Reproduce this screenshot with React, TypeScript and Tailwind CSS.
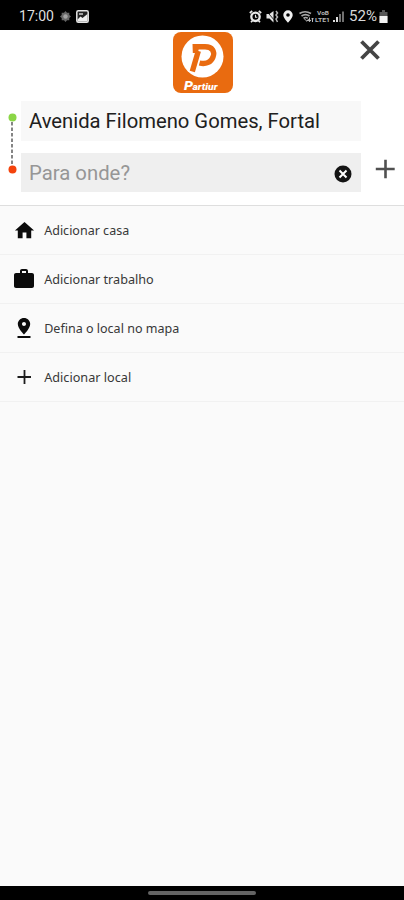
import type { ReactNode } from "react";

const options: { label: string; width: number; icon: ReactNode }[] = [
  {
    label: "Adicionar casa",
    width: 85,
    icon: (
      <svg viewBox="0 0 24 24" className="h-[23px] w-[23px]" fill="#0b0b0b">
        <path d="M10 20v-6h4v6h5v-8h3L12 3 2 12h3v8z" />
      </svg>
    ),
  },
  {
    label: "Adicionar trabalho",
    width: 109.5,
    icon: (
      <svg viewBox="0 0 24 24" className="h-6 w-6" fill="#0b0b0b">
        <path d="M20 6h-4V4c0-1.11-.89-2-2-2h-4c-1.11 0-2 .89-2 2v2H4c-1.11 0-1.99.89-1.99 2L2 19c0 1.11.89 2 2 2h16c1.11 0 2-.89 2-2V8c0-1.11-.89-2-2-2zm-6 0h-4V4h4v2z" />
      </svg>
    ),
  },
  {
    label: "Defina o local no mapa",
    width: 135,
    icon: (
      <svg viewBox="0 0 24 24" className="h-6 w-6" fill="#0b0b0b">
        <path d="M18.200 8c0-3.310-2.790-6-6.200-6S5.800 4.690 5.800 8c0 4.500 6.200 10.500 6.200 10.500S18.200 12.500 18.200 8zm-8.200 0c0-1.100.9-2 2-2s2 .9 2 2-.89 2-2 2c-1.100 0-2-.9-2-2zM5.500 20v2h13v-2z" />
      </svg>
    ),
  },
  {
    label: "Adicionar local",
    width: 87,
    icon: (
      <svg viewBox="0 0 24 24" className="h-6 w-6" fill="none" stroke="#1c1c1c" strokeWidth="1.8">
        <path d="M12.500 5v14M5.500 12h13.500" />
      </svg>
    ),
  },
];

function StatusBar() {
  return (
    <div className="flex h-[30px] shrink-0 items-center bg-black pt-[2px] pl-[19px] pr-[16px] text-[#d6d6d6]">
      <svg width="35" height="16" className="overflow-visible">
        <text x="0" y="13" fontSize="14" fill="#dedede" textLength="35" lengthAdjust="spacingAndGlyphs">
          17:00
        </text>
      </svg>
      <svg width="11" height="11" viewBox="0 0 11 11" className="ml-[6px]" fill="#666">
        <path d="M5.5 0 7 1.7 9.3 1.7 9.3 4 11 5.5 9.3 7v2.3H7L5.5 11 4 9.3H1.7V7L0 5.500 1.700 4V1.700H4z" />
        <circle cx="5.500" cy="5.500" r="2.200" fill="#a3a3a3" />
      </svg>
      <svg width="13" height="13" viewBox="0 0 13 13" className="ml-[5px]">
        <rect x=".8" y=".8" width="11.400" height="11.400" rx="1.500" fill="#222" stroke="#e5e5e5" strokeWidth="1.500" />
        <path d="M1.500 9.500 4.500 6.500 6.500 8 11.500 4v7.500h-10z" fill="#eee" />
        <path d="M3 4h4" stroke="#ccc" strokeWidth="1.500" />
      </svg>

      <div className="ml-auto flex items-center">
        {/* alarm */}
        <svg width="13" height="13" viewBox="0 0 13 13" fill="none" stroke="#e8e8e8">
          <circle cx="6.500" cy="6.800" r="4.200" strokeWidth="2.300" />
          <path d="M6.500 4.800V7.300H8.300" strokeWidth="1.100" />
          <path d="M.8 3 3.200.9M12.200 3 9.800.9M2 12.300l1.600-1.800M11 12.300 9.400 10.500" strokeWidth="1.700" />
        </svg>
        {/* muted, vibrating */}
        <svg width="13" height="13" viewBox="0 0 13 13" className="ml-[4px]">
          <path d="M.5 4H3.500L7.500 1v11.500L3.500 8.500H.5z" fill="#e4e4e4" />
          <path d="M0 .5 8 9.800" stroke="#000" strokeWidth=".8" />
          <path d="m10 1 1.500 2L10 5l1.500 2L10 9l1.500 3" fill="none" stroke="#b5b5b5" strokeWidth="1.500" />
        </svg>
        {/* location */}
        <svg width="10" height="13" viewBox="0 0 10 13" className="ml-[4px]">
          <path fillRule="evenodd" fill="#f0f0f0" d="M5 .3A4.700 4.700 0 0 0 .3 5C.3 8 5 12.800 5 12.800S9.700 8 9.700 5A4.700 4.700 0 0 0 5 .3zM5 3.200a1.800 1.800 0 1 1 0 3.600 1.800 1.800 0 0 1 0-3.600z" />
        </svg>
        {/* wifi */}
        <svg width="15" height="13" viewBox="0 0 15 13" className="ml-[6px]">
          <path d="M.5 3.500Q6 0 12 3.500M2.500 6Q6.500 3.300 10.500 6M4.500 8.200Q6.700 6.800 8.700 8.200" fill="none" stroke="#a5a5a5" strokeWidth="1.700" />
          <path d="m5 8.500 3 2.800 1.600-2.300M10.500 7.500v4M9 10l1.500 1.700L12 10M13.500 12V8M12.300 9.300 13.500 8l1.300 1.300" fill="none" stroke="#bbb" />
        </svg>
        {/* volte */}
        <svg width="16" height="13" viewBox="0 0 16 13" className="ml-[1px] overflow-visible" fill="#b4b4b4">
          <text x="2" y="4.800" fontSize="5.500" fontWeight="700" textLength="12" lengthAdjust="spacingAndGlyphs">VoB</text>
          <text x="0" y="12" fontSize="5.500" fontWeight="700" textLength="15" lengthAdjust="spacingAndGlyphs">LTE1</text>
        </svg>
        <svg width="11" height="13" viewBox="0 0 11 13" className="ml-[2px]">
          <path d="M1 12V10M4 12V7" stroke="#ddd" strokeWidth="2" />
          <path d="M7 12V4M10 12V1.500" stroke="#707070" strokeWidth="2" />
        </svg>
        <svg width="28" height="16" className="ml-[5px] overflow-visible">
          <text x="0" y="13" fontSize="14" fill="#d8d8d8" textLength="28" lengthAdjust="spacingAndGlyphs">
            52%
          </text>
        </svg>
        <svg width="9" height="13" viewBox="0 0 9 13" className="ml-[2px]">
          <path d="M3 0h3v2h2.500v11H.5V2H3z" fill="#555" />
          <path d="M.5 6h8v7h-8z" fill="#f2f2f2" />
        </svg>
      </div>
    </div>
  );
}

function Logo() {
  return (
    <svg width="60" height="61" viewBox="0 0 60 61">
      <rect width="60" height="61" rx="8" fill="#e96b10" />
      <circle cx="29.500" cy="24.500" r="21" fill="#fff" />
      {/* slanted P mark */}
      <path
        d="M20 14.800H32C39.500 14.800 42 19.500 40 25C38 30.500 32.500 32.500 26.500 31M25.300 19 19.300 39.500"
        fill="none"
        stroke="#e96b10"
        strokeWidth="5.400"
      />
      <path d="M19.500 12.100h7l-1.500 9h-5.200z" fill="#e96b10" />
      <g fill="#fff" fontStyle="italic" fontWeight="900">
        <text x="11" y="57.500" fontSize="13" textLength="9" lengthAdjust="spacingAndGlyphs">P</text>
        <text x="19.500" y="57.500" fontSize="9.500" textLength="25" lengthAdjust="spacingAndGlyphs">artiur</text>
      </g>
    </svg>
  );
}

export default function App() {
  return (
    <div className="flex h-[900px] w-[404px] flex-col overflow-hidden bg-[#fafafa] font-['Roboto',sans-serif]">
      <StatusBar />

      {/* SEARCH HEADER */}
      <header className="h-[176px] shrink-0 border-b border-[#dedede] bg-white">
        <div className="grid h-[71px] grid-cols-[1fr_60px_1fr] pt-[2px] pl-[1px]">
          <div></div>
          <Logo />
          <button className="mt-[8px] mr-[24px] h-5 w-5 justify-self-end">
            <svg viewBox="0 0 20 20" className="h-5 w-5" stroke="#444" strokeWidth="3.800">
              <path d="m1.500 1.500 17 17m0-17-17 17" />
            </svg>
          </button>
        </div>

        <div className="flex">
          {/* ROUTE MARKERS */}
          <div className="w-[21px] shrink-0">
            <svg width="21" height="91" viewBox="0 0 21 91">
              <path d="M12 21v43" stroke="#444" strokeWidth="1.300" strokeDasharray="3.500 2" />
              <circle cx="12.500" cy="16.500" r="4" fill="#8bd646" />
              <circle cx="12.500" cy="68.500" r="4" fill="#f4430c" />
            </svg>
          </div>

          <div className="flex w-[340px] flex-col gap-[12px]">
            <div className="flex h-10 items-center bg-[#f8f8f8] pl-[8px]">
              <svg width="292" height="28" className="overflow-visible">
                <text x="0" y="20.500" fontSize="20" fill="#202020" textLength="291" lengthAdjust="spacingAndGlyphs">
                  Avenida Filomeno Gomes, Fortal
                </text>
              </svg>
            </div>
            <div className="flex h-[39px] items-center justify-between bg-[#efefef] pr-[9px] pl-[8px]">
              <svg width="101" height="28" className="overflow-visible">
                <text x="0" y="21" fontSize="20" fill="#969696" textLength="101" lengthAdjust="spacingAndGlyphs">
                  Para onde?
                </text>
              </svg>
              <svg width="18" height="18" viewBox="0 0 18 18" className="mt-[2px]">
                <circle cx="9" cy="9" r="8.500" fill="#141414" />
                <path d="m5.500 5.500 7 7m0-7-7 7" stroke="#fff" strokeWidth="2" />
              </svg>
            </div>
          </div>

          <button className="mt-[58px] ml-[14px] h-5 w-5">
            <svg viewBox="0 0 20 20" className="h-5 w-5" stroke="#505050" strokeWidth="2.600">
              <path d="M10.500 .8v18.400M.8 10h18.900" />
            </svg>
          </button>
        </div>
      </header>

      {/* SHORTCUTS */}
      <main className="flex-1">
        {options.map((option) => (
          <div key={option.label} className="flex h-[49px] items-center border-b border-[#f1f1f1] pl-[12px]">
            <div className="flex w-6 justify-center">{option.icon}</div>
            <svg width={option.width} height="20" className="ml-[8px] overflow-visible">
              <text
                x="0.200"
                y="15"
                fontSize="12"
                fill="#383838"
                fontFamily="'Noto Sans', sans-serif"
                textLength={option.width}
                lengthAdjust="spacingAndGlyphs"
              >
                {option.label}
              </text>
            </svg>
          </div>
        ))}
      </main>

      {/* GESTURE BAR */}
      <div className="flex h-[14px] shrink-0 items-center justify-center bg-black">
        <div className="h-[4px] w-[108px] rounded-full bg-[#646464]"></div>
      </div>
    </div>
  );
}
